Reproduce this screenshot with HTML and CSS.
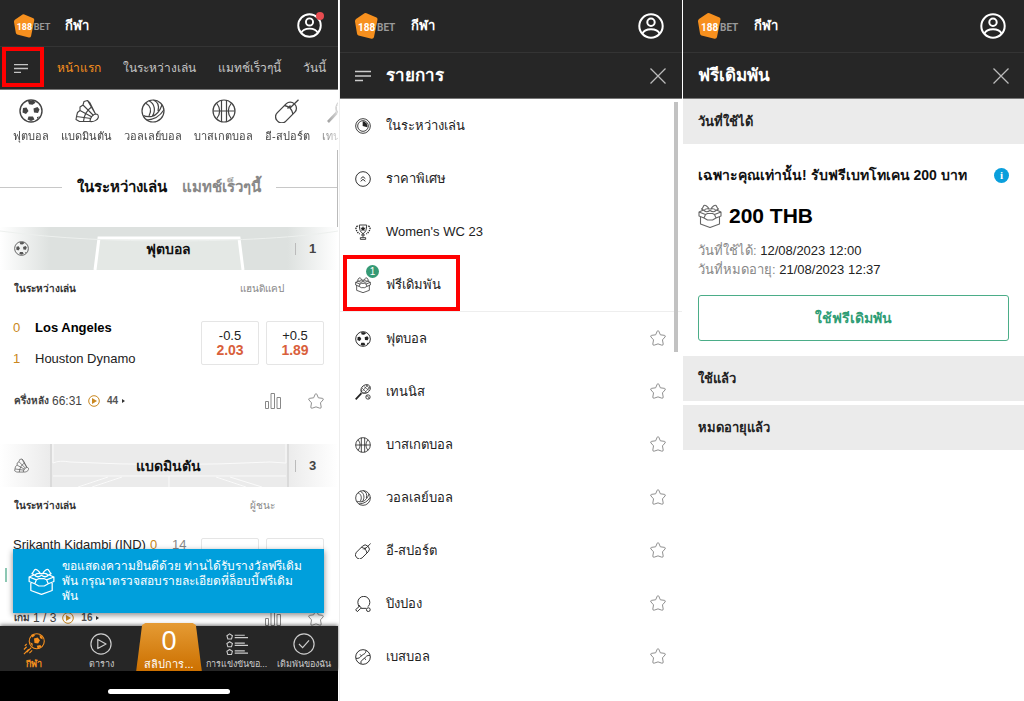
FILE: index.html
```html
<!DOCTYPE html>
<html lang="th">
<head>
<meta charset="utf-8">
<meta name="viewport" content="width=device-width, initial-scale=1">
<title>188BET กีฬา</title>
<link rel="stylesheet" href="styles.css">
</head>
<body>
<svg class="sprite" aria-hidden="true">
  <symbol id="user" viewBox="0 0 26 26"><g fill="none" stroke="currentColor" stroke-width="2"><circle cx="13" cy="13" r="11.7"/><circle cx="13" cy="9.3" r="3.7"/><path d="M4.5 20.5C7 14.8 19 14.8 21.500 20.500"/></g></symbol>
  <symbol id="menu" viewBox="0 0 16 12"><path d="M0 1.500h16M0 6h16M0 10.500h8" stroke="currentColor" stroke-width="1.500"/></symbol>
  <symbol id="close" viewBox="0 0 16 16"><path d="M.5.5l15 15M15.500.5l-15 15" stroke="currentColor" stroke-width="1.300"/></symbol>
  <symbol id="football" viewBox="0 0 24 24"><circle cx="12" cy="12" r="11" fill="none" stroke="currentColor" stroke-width="1.400"/><path fill="currentColor" d="M9 2l6-.3 1.500 2-3 2-3.500-.5zM4 9l3.500-.5 2 3.500-2.500 3-3.500-1.500zM14.500 9.500l4-1.500 2 2.500-1.500 3.500-4-.5zM9.500 17.500l4.500 0 1.500 3-3.500 1.500-3.500-1.500zM18 18l2.500-.5-2.500 2.500z"/></symbol>
  <symbol id="shuttle" viewBox="0 0 24 24"><g fill="none" stroke="currentColor" stroke-width="1.100" stroke-linejoin="round"><path d="M15 22.500L4.500 22.500 1 20.500 1.500 17.500 16 19.500M1.500 17.500L2.500 13.500 5 11.500 17 18M5 11.500L5 8 8 6 18.500 16.500M8 6L9 2.500 12.500 1.500 20.500 15M12.500 1.500L15 4 20.500 15"/><path d="M15 22.500C15 19 17.500 15.500 20.500 15 23 15 23.500 16.500 23.300 18.500 22.500 21 19 23 15 22.500zM8.500 22.500C9 16 11.500 11.500 16.500 8"/></g></symbol>
  <symbol id="volley" viewBox="0 0 24 24"><g fill="none" stroke="currentColor" stroke-width="1.200"><circle cx="12" cy="12" r="11"/><path d="M8 1.800C14 5 15 12 11 17.500M4.500 4c5.500 3 6 8 3.500 13M11 17.500C7 18 4 17.500 2.500 16.500M22.800 11C19 17 14 20.500 6 21M21 6c-2 5.500-5 10-10 11.500M12.500 1c4.500 2 6 6 4.500 11"/></g></symbol>
  <symbol id="basket" viewBox="0 0 24 24"><g fill="none" stroke="currentColor" stroke-width="1.200"><circle cx="12" cy="12" r="11"/><path d="M1 12h22M9.500 1v22M14.500 1v22M4.500 4c4 5 4 11 0 16M19.500 4c-4 5-4 11 0 16"/></g></symbol>
  <symbol id="mouse" viewBox="0 0 24 24"><g fill="none" stroke="currentColor" stroke-width="1.300"><rect x="-1" y="7.500" width="24" height="12" rx="5.500" transform="rotate(-45 11 13.500)"/><path d="M9.500 6.500c2 .5 4 1 5.500 2.500s2.500 4 3 6M14.500 9.500L23.500.8M12.500 9.500l3-3"/></g></symbol>
  <symbol id="tennis" viewBox="0 0 24 24"><g fill="none" stroke="currentColor" stroke-width="1.200"><ellipse cx="16" cy="7.500" rx="7.500" ry="6" transform="rotate(-35 16 7.500)"/><path stroke-width=".9" d="M10.500 6l7 7M13 3.500l8 6M16.500 1.800l6 5M11 11l8-9.500M15 13L22.500 4M9.500 8L9 14l7-1"/><circle cx="19.500" cy="19.500" r="3.300"/><path d="M17 18c3 0 4 2 4 4"/></g><path d="M9.500 14L1 23" stroke="currentColor" stroke-width="2.600"/></symbol>
  <symbol id="pong" viewBox="0 0 24 24"><g fill="none" stroke="currentColor" stroke-width="1.400"><path d="M7 16A9 9 0 1 1 19.500 16"/><path d="M5.500 13.500L6 16 1 20.500l2.500 3L8 19l2-.5h7M5.500 13.500L10 18.500"/><circle cx="20" cy="20.500" r="2.800"/></g></symbol>
  <symbol id="baseball" viewBox="0 0 24 24"><g fill="none" stroke="currentColor" stroke-width="1.400"><circle cx="12" cy="12" r="11"/><path d="M16.500 2C16 8 13 7 10 10c-3 3-4 4.500-8.500 4M22.500 9.500C18 9 16 12 14 14c-3 3-6 3-5 8M7.500 8l2.500 2.500M14 14l2.500 2"/></g></symbol>
  <symbol id="live" viewBox="0 0 24 24"><g fill="none" stroke="currentColor" stroke-width="1.300"><circle cx="12" cy="12" r="11"/><circle cx="12" cy="12" r="8"/></g><path fill="currentColor" d="M11.500 5a7.500 7.500 0 0 1 7 9l-7-2z"/></symbol>
  <symbol id="boost" viewBox="0 0 24 24"><g fill="none" stroke="currentColor" stroke-width="1.400"><circle cx="12" cy="12" r="11"/><path d="M8.500 11.500l3.500-3 3.500 3M8.500 15.500l3.500-3 3.500 3"/></g></symbol>
  <symbol id="trophy" viewBox="0 0 24 24"><g fill="none" stroke="currentColor" stroke-width="1.300"><path d="M6.500 1.500h11c0 7-1.500 11-5.500 13-4-2-5.500-6-5.500-13zM12 14v6M9 16.500h6M8 20.500h8v2.500H8z"/><path stroke-width="2" stroke-dasharray="2 1.500" d="M4 3c-3 1-3 4-2 6s2 4 5 6M20 3c3 1 3 4 2 6s-2 4-5 6"/></g><path fill="currentColor" d="M12 3l1.200 2.500 2.800.3-2 2 .5 2.700-2.500-1.300-2.500 1.300.5-2.700-2-2 2.800-.3z"/></symbol>
  <symbol id="gift" viewBox="0 0 24 24"><g fill="none" stroke="currentColor" stroke-width="1.100" stroke-linejoin="round"><path d="M2.500 12.500V20L12 23.500 21.500 20V12.500M1 8V12L6 14 7.500 10.500zM23 8V12L18 14 16.500 10.500zM1 8L5.500 6M23 8L18.500 6M7.500 10.500L9.500 9.500H14.500L16.500 10.500M6 14L9.500 16H14.500L18 14"/><path d="M11 5C10 2.500 7 .5 6 1.500S5 4 3.500 5L6 6.500C7.500 4.500 9 4.500 11 5zM13 5C14 2.500 17 .5 18 1.500S19 4 20.500 5L18 6.500C16.500 4.500 15 4.500 13 5zM11 5H13M6 6.500C8 8.500 10 8 12 6.500 14 8 16 8.500 18 6.500"/></g></symbol>
  <symbol id="star" viewBox="0 0 24 24"><path fill="none" stroke="currentColor" stroke-width="1.400" stroke-linejoin="round" d="M12 1Q13 1 13.500 2.500L15.500 7.200 21.500 8Q24 8.500 22.500 10.500L18.700 14.800 19.800 21Q19.800 23.500 17.500 22.700L12 20.800 6.500 22.700Q4.200 23.500 4.200 21L5.300 14.800 1.500 10.500Q0 8.500 2.500 8L8.500 7.200 10.500 2.500Q11 1 12 1z"/></symbol>
  <symbol id="bars" viewBox="0 0 16 16"><path fill="none" stroke="currentColor" d="M.5 8.500h3v7h-3zM6 .5h3.500v15H6zM12 4.500h3.500v11H12z"/></symbol>
  <symbol id="playball" viewBox="0 0 12 12"><circle cx="6" cy="6" r="5.300" fill="none" stroke="currentColor"/><path fill="currentColor" d="M4 3L9 6 4 9z"/></symbol>
  <symbol id="play" viewBox="0 0 24 24"><g fill="none" stroke="currentColor" stroke-width="1.300"><circle cx="12" cy="12" r="11"/><path stroke-linejoin="round" d="M8.500 7l9 5-9 5z"/></g></symbol>
  <symbol id="check" viewBox="0 0 24 24"><g fill="none" stroke="currentColor" stroke-width="1.300"><circle cx="12" cy="12" r="11"/><path d="M6.500 12l4 4 7-8"/></g></symbol>
  <symbol id="list" viewBox="0 0 24 24"><g fill="none" stroke="currentColor" stroke-width="1.200"><path d="M4 1l3 2-1 3.500H2L1 3zM4 9.500l3 2-1 3.500H2l-1-3.500zM4 18l3 2-1 3.500H2L1 20z"/><path d="M9.500 2.500h11M9.500 5H24M9.500 11h11M9.500 13.500H24M9.500 19.500h11M9.500 22H24"/></g></symbol>
  <symbol id="kick" viewBox="0 0 24 24"><g fill="none" stroke="currentColor" stroke-width="1.200"><circle cx="15" cy="9" r="8.200"/><path d="M4 15l-3 3M6 18l-5 5M10 19l-3 3M2 14l2-2M9 16l-5 5"/></g><path fill="currentColor" d="M12 6l4-1 2.500 3-2 3.500-4-.5zM9 2l3-1 1 2-3 2zM18 2l3 2 .5 3-3-1.500zM7.500 10l3 1.500V15zM15 14l4-1 1 2-4 2z"/></symbol>
</svg>

<main class="screens">
  <section class="screen home">
    <header class="top">
      <svg class="logo" viewBox="0 0 40 26" role="img" aria-label="188BET"><path class="logo-shape" d="M9.500.3Q10.500-.2 11.500.3L21.500 4.500Q22.600 5 22.500 6.500L19 24Q18.500 26 16.500 25.700L3.500 22.500Q2.200 22 2 20.500L0 8.500Q-.2 7 1 6z"/><text class="logo-num" x="3" y="18">188</text><text class="logo-bet" x="22" y="18">BET</text></svg>
      <span class="brand">กีฬา</span>
      <button class="account" aria-label="บัญชี"><svg><use href="#user"/></svg><i class="dot"></i></button>
    </header>
    <nav class="tabs">
      <button class="tab-menu" aria-label="รายการ"><svg><use href="#menu"/></svg></button>
      <a class="active" href="#">หน้าแรก</a><a href="#">ในระหว่างเล่น</a><a href="#">แมทช์เร็วๆนี้</a><a href="#">วันนี้</a>
    </nav>
    <div class="feed">
      <nav class="sports">
        <a href="#"><svg><use href="#football"/></svg>ฟุตบอล</a>
        <a href="#"><svg><use href="#shuttle"/></svg>แบดมินตัน</a>
        <a href="#"><svg><use href="#volley"/></svg>วอลเลย์บอล</a>
        <a href="#"><svg><use href="#basket"/></svg>บาสเกตบอล</a>
        <a href="#"><svg><use href="#mouse"/></svg>อี-สปอร์ต</a>
        <a href="#"><svg><use href="#tennis"/></svg>เทนนิส</a>
      </nav>
      <div class="switch"><button class="on">ในระหว่างเล่น</button><button>แมทช์เร็วๆนี้</button></div>

      <article>
        <div class="banner pitch">
          <svg class="scene" viewBox="0 0 338 43" preserveAspectRatio="none" aria-hidden="true"><path d="M99 11H239L243 43H95z" fill="#e4e8e5"/><path d="M95 43L99 11H239L243 43" fill="none" stroke="#fff" stroke-width="3"/><path d="M0 4C60 12 120 14 169 14S290 12 338 4" fill="none" stroke="#edf0ee"/></svg>
          <svg class="mark"><use href="#football"/></svg><h2>ฟุตบอล</h2><span class="count">1</span>
        </div>
        <div class="market"><b>ในระหว่างเล่น</b><span>แฮนดิแคป</span></div>
        <div class="match">
          <div class="teams">
            <div class="team"><em>0</em><b>Los Angeles</b></div>
            <div class="team"><em>1</em><span>Houston Dynamo</span></div>
          </div>
          <button class="odd"><span>-0.5</span><b>2.03</b></button>
          <button class="odd"><span>+0.5</span><b>1.89</b></button>
        </div>
        <div class="status"><b>ครึ่งหลัง</b><span>66:31</span><svg class="vid"><use href="#playball"/></svg><strong>44</strong><i class="caret"></i><svg class="chart"><use href="#bars"/></svg><button class="fav" aria-label="รายการโปรด"><svg><use href="#star"/></svg></button></div>
      </article>

      <article>
        <div class="banner court">
          <svg class="scene" viewBox="0 0 338 43" preserveAspectRatio="none" aria-hidden="true"><path d="M51 0V43M288 0V43" stroke="#dadada" stroke-width="2"/><path d="M53 0V19Q60 16 70 18 170 23 270 18L286 19V0M53 32H286M169 32V43M108 33L78 43M122 33L92 43M230 33L262 43M216 33L246 43" fill="none" stroke="#fafafa"/></svg>
          <svg class="mark"><use href="#shuttle"/></svg><h2>แบดมินตัน</h2><span class="count">3</span>
        </div>
        <div class="market"><b>ในระหว่างเล่น</b><span>ผู้ชนะ</span></div>
        <div class="match">
          <div class="teams">
            <div class="team player"><span>Srikanth Kidambi (IND)</span><em>0</em><small>14</small></div>
          </div>
          <button class="odd" aria-label="ราคา 1"></button>
          <button class="odd" aria-label="ราคา 2"></button>
        </div>
        <div class="status"><b>เกม</b><span>1 / 3</span><svg class="vid"><use href="#playball"/></svg><strong>16</strong><i class="caret"></i><svg class="chart"><use href="#bars"/></svg><button class="fav" aria-label="รายการโปรด"><svg><use href="#star"/></svg></button></div>
      </article>
    </div>

    <footer class="dock">
      <div class="toast" role="status"><svg><use href="#gift"/></svg><p>ขอแสดงความยินดีด้วย ท่านได้รับรางวัลฟรีเดิม<br>พัน กรุณาตรวจสอบรายละเอียดที่ล็อบบี้ฟรีเดิม<br>พัน</p></div>
      <i class="tick"></i>
      <nav class="bar">
        <a class="active" href="#"><svg><use href="#kick"/></svg><span>กีฬา</span></a>
        <a href="#"><svg><use href="#play"/></svg><span>ตาราง</span></a>
        <a class="slip" href="#"><strong>0</strong><span>สลิปการ...</span></a>
        <a href="#"><svg><use href="#list"/></svg><span>การแข่งขันขอ...</span></a>
        <a href="#"><svg><use href="#check"/></svg><span>เดิมพันของฉัน</span></a>
      </nav>
      <div class="gesture"><i></i></div>
    </footer>
    <i class="ring ring-menu"></i>
  </section>

  <section class="screen menu">
    <header class="top">
      <svg class="logo" viewBox="0 0 40 26" role="img" aria-label="188BET"><path class="logo-shape" d="M9.500.3Q10.500-.2 11.500.3L21.500 4.500Q22.600 5 22.500 6.500L19 24Q18.500 26 16.500 25.700L3.500 22.500Q2.200 22 2 20.500L0 8.500Q-.2 7 1 6z"/><text class="logo-num" x="3" y="18">188</text><text class="logo-bet" x="22" y="18">BET</text></svg>
      <span class="brand">กีฬา</span>
      <button class="account" aria-label="บัญชี"><svg><use href="#user"/></svg></button>
    </header>
    <div class="title"><svg class="burger"><use href="#menu"/></svg><h1>รายการ</h1><button class="close" aria-label="ปิด"><svg><use href="#close"/></svg></button></div>
    <ul class="rows">
      <li><a href="#"><svg><use href="#live"/></svg>ในระหว่างเล่น</a></li>
      <li><a href="#"><svg><use href="#boost"/></svg>ราคาพิเศษ</a></li>
      <li><a href="#"><svg><use href="#trophy"/></svg>Women's WC 23</a></li>
      <li><a href="#"><svg><use href="#gift"/></svg>ฟรีเดิมพัน</a><span class="badge">1</span><i class="ring ring-row"></i></li>
    </ul>
    <ul class="rows sports-list">
      <li><a href="#"><svg><use href="#football"/></svg>ฟุตบอล</a><button class="fav" aria-label="รายการโปรด ฟุตบอล"><svg><use href="#star"/></svg></button></li>
      <li><a href="#"><svg><use href="#tennis"/></svg>เทนนิส</a><button class="fav" aria-label="รายการโปรด เทนนิส"><svg><use href="#star"/></svg></button></li>
      <li><a href="#"><svg><use href="#basket"/></svg>บาสเกตบอล</a><button class="fav" aria-label="รายการโปรด บาสเกตบอล"><svg><use href="#star"/></svg></button></li>
      <li><a href="#"><svg><use href="#volley"/></svg>วอลเลย์บอล</a><button class="fav" aria-label="รายการโปรด วอลเลย์บอล"><svg><use href="#star"/></svg></button></li>
      <li><a href="#"><svg><use href="#mouse"/></svg>อี-สปอร์ต</a><button class="fav" aria-label="รายการโปรด อี-สปอร์ต"><svg><use href="#star"/></svg></button></li>
      <li><a href="#"><svg><use href="#pong"/></svg>ปิงปอง</a><button class="fav" aria-label="รายการโปรด ปิงปอง"><svg><use href="#star"/></svg></button></li>
      <li><a href="#"><svg><use href="#baseball"/></svg>เบสบอล</a><button class="fav" aria-label="รายการโปรด เบสบอล"><svg><use href="#star"/></svg></button></li>
    </ul>
    <i class="scroll"></i>
  </section>

  <section class="screen bets">
    <header class="top">
      <svg class="logo" viewBox="0 0 40 26" role="img" aria-label="188BET"><path class="logo-shape" d="M9.500.3Q10.500-.2 11.500.3L21.500 4.500Q22.600 5 22.500 6.500L19 24Q18.500 26 16.500 25.700L3.500 22.500Q2.200 22 2 20.500L0 8.500Q-.2 7 1 6z"/><text class="logo-num" x="3" y="18">188</text><text class="logo-bet" x="22" y="18">BET</text></svg>
      <span class="brand">กีฬา</span>
      <button class="account" aria-label="บัญชี"><svg><use href="#user"/></svg></button>
    </header>
    <div class="title"><h1>ฟรีเดิมพัน</h1><button class="close" aria-label="ปิด"><svg><use href="#close"/></svg></button></div>
    <h2 class="fold">วันที่ใช้ได้</h2>
    <div class="offer">
      <div class="offer-head"><h3>เฉพาะคุณเท่านั้น! รับฟรีเบทโทเคน 200 บาท</h3><button class="info" aria-label="ข้อมูล">i</button></div>
      <div class="amount"><svg><use href="#gift"/></svg>200 THB</div>
      <dl><div><dt>วันที่ใช้ได้:</dt> <dd>12/08/2023 12:00</dd></div><div><dt>วันที่หมดอายุ:</dt> <dd>21/08/2023 12:37</dd></div></dl>
      <button class="use">ใช้ฟรีเดิมพัน</button>
    </div>
    <h2 class="fold">ใช้แล้ว</h2>
    <h2 class="fold">หมดอายุแล้ว</h2>
  </section>
</main>
</body>
</html>
```
FILE: styles.css
```css
* { box-sizing: border-box; }
body { margin: 0; background: #fff; color: #222; font: 13px/16px "Liberation Sans", "Noto Sans", sans-serif; }
a { color: inherit; text-decoration: none; }
button { margin: 0; padding: 0; border: 0; background: none; color: inherit; font: inherit; }
h1, h2, h3, p, ul, dl, dd { margin: 0; padding: 0; }
em, i { font-style: normal; }
svg { display: block; flex: none; }
.sprite { position: absolute; width: 0; height: 0; }

.screens { display: grid; grid-template-columns: 339fr 343fr 342fr; min-height: 100vh; }
.screen { position: relative; min-width: 0; display: flex; flex-direction: column; }
.menu { border-left: 1px solid #eee; }
.bets { border-left: 1px solid #fff; }

/* Shared header */
.top { display: flex; align-items: center; height: 53px; padding: 0 18px 0 15px; background: #262626; border-bottom: 1px solid #343434; color: #fff; }
.logo { width: 40px; height: 26px; overflow: visible; }
.logo-shape { fill: #f7901e; }
.logo-num, .logo-bet { font: bold 10px Roboto, sans-serif; fill: #fff; }
.logo-bet { fill: #999; }
.brand { margin-left: 16px; font-size: 13px; font-weight: bold; }
.account { position: relative; margin-left: auto; }
.account svg { width: 26px; height: 26px; }
.dot { position: absolute; top: -1px; right: -2px; width: 8px; height: 8px; border-radius: 50%; background: #e84c50; }
.title { display: flex; align-items: center; height: 46px; padding: 0 15px; background: #262626; border-bottom: 1px solid #777; color: #fff; }
.title h1 { font-size: 17px; line-height: 24px; }
.burger { width: 16px; height: 12px; margin-right: 15px; color: #ccc; }
.close { margin-left: auto; color: #bbb; }
.close svg { width: 16px; height: 16px; }
.ring { position: absolute; border: 4px solid #f00; pointer-events: none; }

/* Home screen */
.home { height: 100vh; overflow: hidden; padding-right: 1px; background: #fff; }
.home .top { height: 47px; padding: 5px 16px 0 14px; }
.home .logo { width: 36px; height: 24px; }
.home .account svg { width: 25px; height: 25px; }
.home .brand { margin-left: 15px; }
.tabs { display: flex; align-items: center; gap: 22px; height: 43px; flex: none; padding-left: 14px; background: #262626; border-bottom: 1px solid #777; color: #c4c4c4; font-size: 12px; white-space: nowrap; overflow: hidden; }
.tab-menu { margin-right: 7px; }
.tab-menu svg { width: 14px; height: 11px; }
.tabs .active { color: #f7901e; }
.ring-menu { left: 2px; top: 47px; width: 42px; height: 40px; }
.feed { flex: 1; min-height: 0; overflow: hidden; }
.sports { display: flex; gap: 12px; height: 60px; padding: 9px 0 0 13px; overflow: hidden; color: #444; font-size: 11px; white-space: nowrap; -webkit-mask-image: linear-gradient(90deg, #000 92%, transparent 102%); mask-image: linear-gradient(90deg, #000 92%, transparent 102%); }
.sports a { display: flex; flex-direction: column; align-items: center; gap: 5px; }
.sports svg { width: 24px; height: 24px; }
.switch { display: flex; align-items: center; justify-content: center; gap: 15px; height: 77px; padding-bottom: 3px; border-right: 1px solid #bbb; font-size: 15px; font-weight: bold; color: #888; white-space: nowrap; }
.switch::before, .switch::after { content: ""; flex: 1; height: 1px; background: #c8c8c8; }
.switch .on { color: #111; }
.banner { position: relative; display: flex; align-items: center; height: 43px; }
.pitch { background: linear-gradient(90deg, #fff, #dde1df 15%, #dde1df 85%, #fff); }
.court { background: linear-gradient(90deg, #fff, #ebebeb 15%, #ebebeb 85%, #fff); }
.scene { position: absolute; inset: 0; width: 100%; height: 100%; }
.mark { position: relative; width: 15px; height: 15px; margin-left: 14px; color: #555; }
.banner h2 { position: relative; flex: 1; padding-left: 13px; text-align: center; color: #111; font-size: 14px; line-height: 20px; }
.count { position: relative; width: 43px; padding-right: 9px; border-left: 1px solid #bbb; text-align: center; font-weight: bold; line-height: 12px; color: #444; }
.market { display: flex; align-items: center; height: 37px; padding-left: 14px; font-size: 10px; }
.market span { margin-left: auto; width: 152px; text-align: center; color: #888; }
.market b { color: #333; }
.match { display: flex; align-items: flex-start; gap: 7px; height: 76px; padding: 14px 14px 0 13px; color: #222; }
.teams { flex: 1; min-width: 0; display: grid; gap: 17px; line-height: 14px; white-space: nowrap; }
.team { display: flex; }
.team b { color: #000; }
.team em { width: 22px; color: #c98720; }
.player em { margin-left: 4px; }
.player small { font-size: 13px; color: #888; }
.odd { width: 58px; height: 44px; border: 1px solid #e5e5e5; border-radius: 2px; line-height: 14px; }
.odd span, .odd b { display: block; }
.odd b { color: #d9603b; font-size: 14px; }
.status { display: flex; align-items: center; height: 61px; padding: 0 14px 25px 14px; font-size: 12px; color: #444; }
.status b { margin-right: 3px; font-size: 10px; }
.vid { width: 12px; height: 12px; margin: 0 7px 0 6px; color: #c98720; }
.status strong { font-size: 10px; color: #555; }
.caret { margin-left: 4px; border: 2px solid transparent; border-left: 3px solid #333; border-right: 0; }
.chart { width: 16px; height: 16px; margin-left: auto; color: #888; }
.fav { color: #888; }
.fav svg { width: 16px; height: 16px; }
.status .fav { margin-left: 27px; }
.dock { position: relative; flex: none; }
.toast { position: absolute; left: 13px; right: 14px; bottom: 88px; display: flex; align-items: center; gap: 7px; min-height: 64px; padding: 0 0 0 15px; background: #009fdc; color: #fff; font-size: 12px; line-height: 15px; white-space: nowrap; box-shadow: 0 2px 6px #0007; }
.toast svg { width: 27px; height: 27px; }
.tick { position: absolute; left: 5px; bottom: 119px; width: 2px; height: 14px; background: #8cc7b3; }
.bar { display: grid; grid-template-columns: repeat(5, 1fr); height: 45px; background: #262626; color: #ccc; box-shadow: 0 -1px 4px #0008; }
.bar a { display: flex; flex-direction: column; align-items: center; justify-content: flex-end; gap: 2px; font-size: 9px; line-height: 14px; white-space: nowrap; min-width: 0; }
.bar svg { width: 22px; height: 22px; }
.bar .active { color: #f7901e; font-weight: bold; }
.bar .slip { margin: -3px 1px 0; background: linear-gradient(#e59b34, #cc7000); clip-path: polygon(9% 4%, 14% 0, 86% 0, 91% 4%, 100% 100%, 0 100%); color: #fff; font-size: 11px; }
.slip strong { font: 27px/28px "Liberation Sans", sans-serif; }
.gesture { display: flex; justify-content: center; height: 30px; padding-top: 18px; background: #000; }
.gesture i { width: 122px; height: 5px; border-radius: 3px; background: #fff; }

/* Menu screen */
.menu .title { padding-right: 16px; }
.rows { list-style: none; }
.rows li { position: relative; display: flex; align-items: center; height: 53px; padding: 0 16px 0 15px; }
.rows a { flex: 1; display: flex; align-items: center; gap: 15px; }
.rows a svg { width: 16px; height: 16px; }
.sports-list { border-top: 1px solid #eee; }
.sports-list .fav { margin-bottom: 2px; }
.badge { position: absolute; left: 26px; top: 7px; width: 13px; height: 13px; border-radius: 50%; background: #359a75; color: #fff; font-size: 10px; line-height: 13px; text-align: center; }
.ring-row { left: 3px; top: -3px; width: 117px; height: 56px; }
.scroll { position: absolute; right: 4px; top: 102px; width: 4px; height: 250px; background: #c2c2c2; }

/* Free bets screen */
.fold { height: 45px; padding: 0 15px; background: #ebebeb; color: #222; font-size: 13px; line-height: 45px; }
.fold + .fold { margin-top: 4px; }
.offer { padding: 22px 15px 15px; }
.offer-head { display: flex; align-items: center; justify-content: space-between; color: #111; }
.offer-head h3 { font-size: 14px; line-height: 18px; white-space: nowrap; }
.info { width: 15px; height: 15px; border-radius: 50%; background: #0a9fdc; color: #fff; font: bold 11px/15px "Liberation Serif", serif; }
.amount { display: flex; align-items: center; gap: 7px; height: 24px; margin-top: 20px; color: #000; font-size: 21px; font-weight: bold; }
.amount svg { width: 24px; height: 24px; color: #666; }
dl { margin-top: 13px; line-height: 19px; }
dt, dd { display: inline; }
dt { color: #888; }
.use { display: block; width: 100%; height: 46px; margin-top: 16px; border: 1px solid #4bad88; border-radius: 3px; color: #2f9d75; font-size: 14px; font-weight: bold; }
```
